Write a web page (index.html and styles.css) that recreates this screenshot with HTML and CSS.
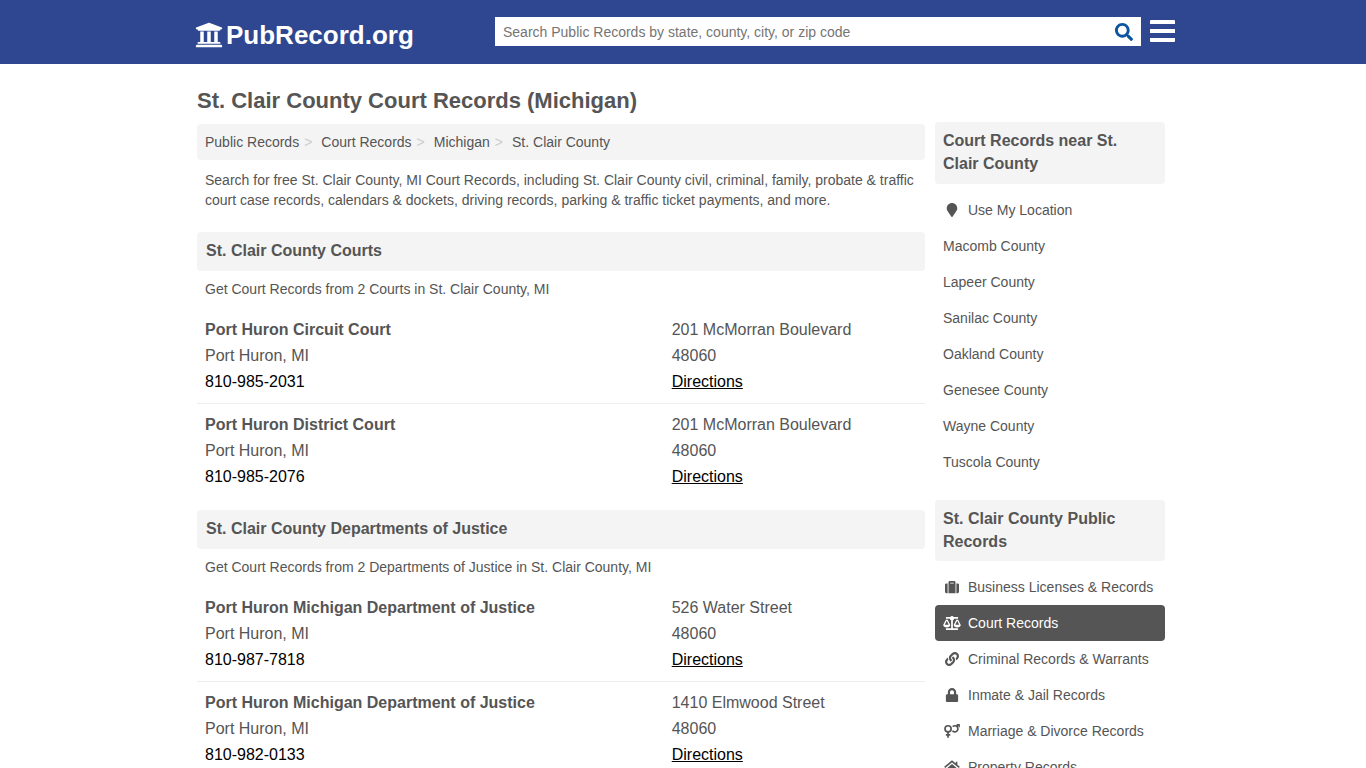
FILE: index.html
```html
<!DOCTYPE html>
<html lang="en">
<head>
<meta charset="utf-8">
<meta name="viewport" content="width=device-width, initial-scale=1">
<title>St. Clair County Court Records (Michigan)</title>
<link rel="stylesheet" href="styles.css">
</head>
<body>
<header class="site-header">
  <div class="header-inner">
    <a class="logo" href="#">
      <svg class="logo-icon" viewBox="0 0 512 512" aria-hidden="true"><path d="M496 128v16a8 8 0 0 1-8 8h-24v12c0 6.627-5.373 12-12 12H60c-6.627 0-12-5.373-12-12v-12H24a8 8 0 0 1-8-8v-16a8 8 0 0 1 4.941-7.392l232-88a7.996 7.996 0 0 1 6.118 0l232 88A8 8 0 0 1 496 128zm-24 304H40c-13.255 0-24 10.745-24 24v16a8 8 0 0 0 8 8h464a8 8 0 0 0 8-8v-16c0-13.255-10.745-24-24-24zM96 192v192H60c-6.627 0-12 5.373-12 12v20h416v-20c0-6.627-5.373-12-12-12h-36V192h-64v192h-64V192h-64v192h-64V192H96z"/></svg>
      <span>PubRecord.org</span>
    </a>
    <form class="search" role="search">
      <input class="search-input" type="text" aria-label="Search public records" placeholder="Search Public Records by state, county, city, or zip code">
      <button class="search-button" type="submit" aria-label="Search">
        <svg class="search-icon" viewBox="0 0 512 512" aria-hidden="true"><path d="M505 442.7L405.3 343c-4.5-4.5-10.6-7-17-7H372c27.6-35.3 44-79.7 44-128C416 93.1 322.9 0 208 0S0 93.1 0 208s93.1 208 208 208c48.3 0 92.7-16.4 128-44v16.3c0 6.4 2.5 12.5 7 17l99.7 99.7c9.4 9.4 24.6 9.4 33.9 0l28.3-28.3c9.4-9.4 9.4-24.6.1-34zM208 336c-70.7 0-128-57.2-128-128 0-70.7 57.2-128 128-128 70.7 0 128 57.2 128 128 0 70.7-57.2 128-128 128z"/></svg>
      </button>
    </form>
    <button class="menu-button" type="button" aria-label="Menu">
      <svg class="menu-icon" viewBox="0 0 25 22" aria-hidden="true"><path d="M1 0h23a1 1 0 0 1 1 1v3H0V1a1 1 0 0 1 1-1zM0 9h25v4H0zM0 18h25v3a1 1 0 0 1-1 1H1a1 1 0 0 1-1-1z"/></svg>
    </button>
  </div>
</header>

<div class="page">
  <main class="main">
    <h1 class="page-title">St. Clair County Court Records (Michigan)</h1>
    <nav aria-label="Breadcrumb">
      <ol class="breadcrumb">
        <li><a href="#">Public Records</a></li>
        <li><a href="#">Court Records</a></li>
        <li><a href="#">Michigan</a></li>
        <li><a href="#">St. Clair County</a></li>
      </ol>
    </nav>
    <p class="text">Search for free St. Clair County, MI Court Records, including St. Clair County civil, criminal, family, probate &amp; traffic court case records, calendars &amp; dockets, driving records, parking &amp; traffic ticket payments, and more.</p>

    <section class="group">
      <h2 class="group-title">St. Clair County Courts</h2>
      <p class="text">Get Court Records from 2 Courts in St. Clair County, MI</p>
      <div class="office">
        <div><h3 class="office-name">Port Huron Circuit Court</h3><div>Port Huron, MI</div><a class="phone" href="#">810-985-2031</a></div>
        <div><div>201 McMorran Boulevard</div><div>48060</div><a class="directions" href="#">Directions</a></div>
      </div>
      <div class="office">
        <div><h3 class="office-name">Port Huron District Court</h3><div>Port Huron, MI</div><a class="phone" href="#">810-985-2076</a></div>
        <div><div>201 McMorran Boulevard</div><div>48060</div><a class="directions" href="#">Directions</a></div>
      </div>
    </section>

    <section class="group">
      <h2 class="group-title">St. Clair County Departments of Justice</h2>
      <p class="text">Get Court Records from 2 Departments of Justice in St. Clair County, MI</p>
      <div class="office">
        <div><h3 class="office-name">Port Huron Michigan Department of Justice</h3><div>Port Huron, MI</div><a class="phone" href="#">810-987-7818</a></div>
        <div><div>526 Water Street</div><div>48060</div><a class="directions" href="#">Directions</a></div>
      </div>
      <div class="office">
        <div><h3 class="office-name">Port Huron Michigan Department of Justice</h3><div>Port Huron, MI</div><a class="phone" href="#">810-982-0133</a></div>
        <div><div>1410 Elmwood Street</div><div>48060</div><a class="directions" href="#">Directions</a></div>
      </div>
    </section>
  </main>

  <aside class="sidebar">
    <section class="side-group">
      <h2 class="side-title">Court Records near St. Clair County</h2>
      <ul class="side-list">
        <li><a class="side-link" href="#"><svg class="icon" viewBox="0 0 384 512" aria-hidden="true"><path d="M172.268 501.67C26.97 291.031 0 269.413 0 192 0 85.961 85.961 0 192 0s192 85.961 192 192c0 77.413-26.97 99.031-172.268 309.67-9.535 13.774-29.93 13.773-39.464 0z"/></svg>Use My Location</a></li>
        <li><a class="side-link" href="#">Macomb County</a></li>
        <li><a class="side-link" href="#">Lapeer County</a></li>
        <li><a class="side-link" href="#">Sanilac County</a></li>
        <li><a class="side-link" href="#">Oakland County</a></li>
        <li><a class="side-link" href="#">Genesee County</a></li>
        <li><a class="side-link" href="#">Wayne County</a></li>
        <li><a class="side-link" href="#">Tuscola County</a></li>
      </ul>
    </section>
    <section class="side-group">
      <h2 class="side-title">St. Clair County Public Records</h2>
      <ul class="side-list">
        <li><a class="side-link" href="#"><svg class="icon" viewBox="0 0 512 512" aria-hidden="true"><path d="M128 480h256V80c0-26.5-21.5-48-48-48H176c-26.5 0-48 21.5-48 48v400zm64-384h128v32H192V96zm320 80v256c0 26.5-21.5 48-48 48h-48V128h48c26.5 0 48 21.5 48 48zM96 480H48c-26.5 0-48-21.5-48-48V176c0-26.5 21.5-48 48-48h48v352z"/></svg>Business Licenses &amp; Records</a></li>
        <li><a class="side-link active" href="#" aria-current="page"><svg class="icon" viewBox="0 0 640 512" aria-hidden="true"><path d="M256 336h-.02c0-16.18 1.34-8.73-85.05-181.51-17.65-35.29-68.19-35.36-85.87 0C-2.06 328.75.02 320.33.02 336H0c0 44.18 57.31 80 128 80s128-35.82 128-80zM128 176l72 144H56l72-144zm511.98 160c0-16.18 1.34-8.73-85.05-181.51-17.65-35.29-68.19-35.36-85.87 0-87.12 174.26-85.04 165.84-85.04 181.51H384c0 44.18 57.31 80 128 80s128-35.82 128-80h-.02zM440 320l72-144 72 144H440zm88 128H352V153.25c23.51-10.29 41.16-31.48 46.39-57.25H528c8.84 0 16-7.16 16-16V48c0-8.84-7.16-16-16-16H383.64C369.04 12.68 346.09 0 320 0s-49.04 12.68-63.64 32H112c-8.84 0-16 7.16-16 16v32c0 8.84 7.16 16 16 16h129.61c5.23 25.76 22.87 46.96 46.39 57.25V448H112c-8.84 0-16 7.16-16 16v32c0 8.84 7.16 16 16 16h416c8.84 0 16-7.16 16-16v-32c0-8.84-7.16-16-16-16z"/></svg>Court Records</a></li>
        <li><a class="side-link" href="#"><svg class="icon" viewBox="0 0 512 512" aria-hidden="true"><path d="M326.612 185.391c59.747 59.809 58.927 155.698.36 214.59-.11.12-.24.25-.36.37l-67.2 67.2c-59.27 59.27-155.699 59.262-214.96 0-59.27-59.26-59.27-155.7 0-214.96l37.106-37.106c9.84-9.84 26.786-3.3 27.294 10.606.648 17.722 3.826 35.527 9.69 52.721 1.986 5.822.567 12.262-3.783 16.612l-13.087 13.087c-28.026 28.026-28.905 73.66-1.155 101.96 28.024 28.579 74.086 28.749 102.325.51l67.2-67.19c28.191-28.191 28.073-73.757 0-101.83-3.701-3.694-7.429-6.564-10.341-8.569a16.037 16.037 0 0 1-6.947-12.606c-.396-10.567 3.348-21.456 11.698-29.806l21.054-21.055c5.521-5.521 14.182-6.199 20.584-1.731a152.482 152.482 0 0 1 20.522 17.197zM467.547 44.449c-59.261-59.262-155.69-59.27-214.96 0l-67.2 67.2c-.12.12-.25.25-.36.37-58.566 58.892-59.387 154.781.36 214.59a152.454 152.454 0 0 0 20.521 17.196c6.402 4.468 15.064 3.789 20.584-1.731l21.054-21.055c8.35-8.35 12.094-19.239 11.698-29.806a16.037 16.037 0 0 0-6.947-12.606c-2.912-2.005-6.64-4.875-10.341-8.569-28.073-28.073-28.191-73.639 0-101.83l67.2-67.19c28.239-28.239 74.3-28.069 102.325.51 27.75 28.3 26.872 73.934-1.155 101.96l-13.087 13.087c-4.35 4.35-5.769 10.79-3.783 16.612 5.864 17.194 9.042 34.999 9.69 52.721.509 13.906 17.454 20.446 27.294 10.606l37.106-37.106c59.271-59.259 59.271-155.699.001-214.959z"/></svg>Criminal Records &amp; Warrants</a></li>
        <li><a class="side-link" href="#"><svg class="icon" viewBox="0 0 448 512" aria-hidden="true"><path d="M400 224h-24v-72C376 68.2 307.8 0 224 0S72 68.2 72 152v72H48c-26.5 0-48 21.5-48 48v192c0 26.5 21.5 48 48 48h352c26.5 0 48-21.5 48-48V272c0-26.5-21.5-48-48-48zm-104 0H152v-72c0-39.7 32.3-72 72-72s72 32.3 72 72v72z"/></svg>Inmate &amp; Jail Records</a></li>
        <li><a class="side-link" href="#"><svg class="icon" viewBox="0 0 576 512" aria-hidden="true"><g fill="none" stroke="currentColor" stroke-width="62"><circle cx="144" cy="176" r="112"/><path d="M144 288v212M64 400h160M314 96a112 112 0 1 1-10 150M452 112L530 34"/></g><path d="M440 0h124a12 12 0 0 1 12 12v124z"/></svg>Marriage &amp; Divorce Records</a></li>
        <li><a class="side-link" href="#"><svg class="icon" viewBox="0 0 576 512" aria-hidden="true"><path d="M288 150L96 308v156c0 9 7 16 16 16h112V352h128v128h112c9 0 16-7 16-16V308z"/><path d="M20 270L288 50l268 220M456 60v120" fill="none" stroke="currentColor" stroke-width="60"/></svg>Property Records</a></li>
      </ul>
    </section>
  </aside>
</div>
</body>
</html>
```
FILE: styles.css
```css
* { box-sizing: border-box; }

body {
  margin: 0;
  background: #fff;
  color: #555;
  font: 14px/20px "Liberation Sans", Arial, sans-serif;
}

h1, h2, h3, p, ul, ol { margin: 0; padding: 0; }
ul, ol { list-style: none; }
a { color: inherit; text-decoration: none; }
svg { fill: currentColor; }

.site-header { background: #2e4790; }

.header-inner {
  display: flex;
  align-items: flex-start;
  max-width: 984px;
  min-height: 64px;
  margin: 0 auto;
  padding: 17px 0 0 4px;
}

.logo {
  display: flex;
  align-items: center;
  flex: 0 0 300px;
  gap: 3px;
  height: 36px;
  color: #fff;
  font-size: 26px;
  font-weight: bold;
}

.logo-icon { width: 28px; height: 30px; }

.search {
  display: flex;
  flex: 1;
  height: 29px;
  background: #fff;
}

.search-input {
  flex: 1;
  min-width: 0;
  padding: 0 8px;
  border: 0;
  background: none;
  font: inherit;
}
.search-input::placeholder { color: #757575; opacity: 1; }

.search-button, .menu-button {
  padding: 0;
  border: 0;
  background: none;
  cursor: pointer;
}
.search-button { width: 34px; color: #0b549f; }
.search-icon { display: block; width: 18px; height: 18px; margin: 0 auto; }
.menu-button { margin: 3px 0 0 9px; color: #fff; }
.menu-icon { display: block; width: 25px; height: 22px; }

.page {
  display: flex;
  align-items: flex-start;
  gap: 10px;
  max-width: 972px;
  margin: 0 auto;
  padding-right: 4px;
}

.main { flex: 1; min-width: 0; padding-top: 24px; }

.page-title {
  margin-bottom: 10px;
  font-size: 22px;
  line-height: 26px;
}

.breadcrumb {
  display: flex;
  margin-bottom: 10px;
  padding: 8px;
  border-radius: 4px;
  background: #f4f4f4;
}
.breadcrumb li + li::before {
  padding: 0 9px 0 5px;
  color: #ccc;
  content: ">";
}

.text { padding: 0 8px; }

.group { margin-top: 22px; }
.group + .group { margin-top: 12px; }

.group-title {
  margin-bottom: 8px;
  padding: 7px 9px 9px;
  border-radius: 4px;
  background: #f4f4f4;
  font-size: 16px;
  line-height: 23px;
}
.group .text { margin-bottom: 10px; }

.office {
  display: grid;
  grid-template-columns: 65% 1fr;
  padding: 8px 2px 8px 8px;
  font-size: 16px;
  line-height: 26px;
}
.office + .office { border-top: 1px solid #eee; }
.office-name { font-size: 16px; }
.phone, .directions { color: #000; }
.directions { text-decoration: underline; }

.sidebar { flex: 0 0 230px; padding-top: 58px; }
.side-group { margin-bottom: 20px; }

.side-title {
  margin-bottom: 8px;
  padding: 7px 8px 8px;
  border-radius: 4px;
  background: #f4f4f4;
  font-size: 16px;
  line-height: 23px;
}
.side-group:first-child .side-title { padding-bottom: 9px; }

.side-link {
  display: flex;
  align-items: center;
  gap: 7px;
  padding: 8px;
  border-radius: 4px;
}
.side-link.active { background: #555; color: #fff; }
.icon { width: 18px; height: 14px; }
```
